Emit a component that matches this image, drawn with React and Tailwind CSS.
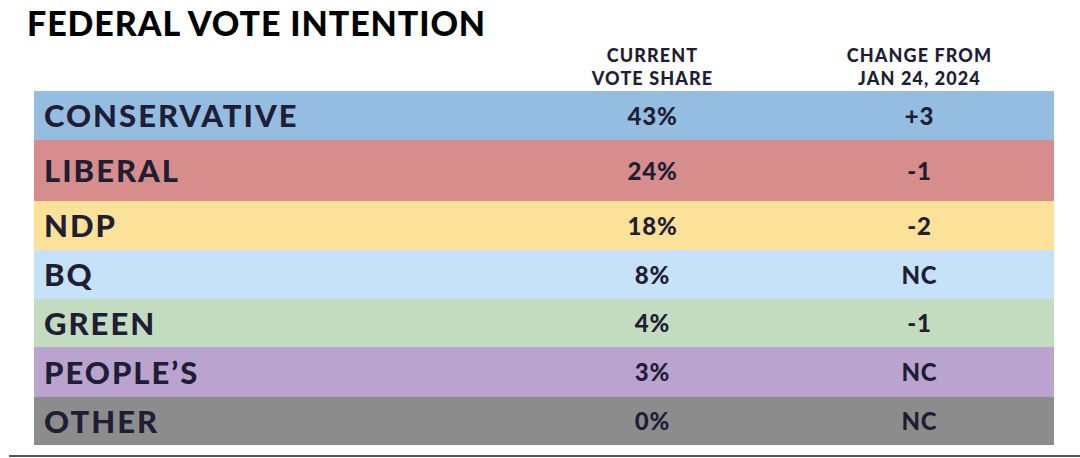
import React from 'react';

const rows = [
    { name: 'CONSERVATIVE', share: '43%', change: '+3', bg: 'bg-[#95bde1]', h: 'h-[49px]' },
    { name: 'LIBERAL', share: '24%', change: '-1', bg: 'bg-[#d78d8b]', h: 'h-[61px]' },
    { name: 'NDP', share: '18%', change: '-2', bg: 'bg-[#fbe298]', h: 'h-[49px]' },
    { name: 'BQ', share: '8%', change: 'NC', bg: 'bg-[#c5e2f8]', h: 'h-[49px]' },
    { name: 'GREEN', share: '4%', change: '-1', bg: 'bg-[#c3dcc0]', h: 'h-[48px]' },
    { name: 'PEOPLE’S', share: '3%', change: 'NC', bg: 'bg-[#baa3cf]', h: 'h-[50px]' },
    { name: 'OTHER', share: '0%', change: 'NC', bg: 'bg-[#8c8c8c]', h: 'h-[48px]' },
];

const App = () => {
    return (
        <div className="w-[1080px] h-[458px] bg-white overflow-hidden font-['Lato',sans-serif] text-[#1f1e34]">
            {/* Title */}
            <h1 className="pl-[27px] pt-[3px] h-[44px] text-[34px] leading-[40px] font-black text-black tracking-[0.9px]">
                FEDERAL VOTE INTENTION
            </h1>

            {/* Column headers */}
            <div className="ml-[34px] w-[1020px] grid grid-cols-[486px_265px_1fr] h-[47px] text-[18px] leading-[23px] font-black tracking-[1.1px]">
                <div />
                <div className="text-center">CURRENT<br />VOTE SHARE</div>
                <div className="text-center">CHANGE FROM<br />JAN 24, 2024</div>
            </div>

            {/* Table */}
            <div className="ml-[34px] w-[1020px] flex flex-col">
                {rows.map((r) => (
                    <div key={r.name} className={`grid grid-cols-[486px_265px_1fr] items-center ${r.bg} ${r.h}`}>
                        <div className="pl-[10px] text-[31px] font-black tracking-[2px]">{r.name}</div>
                        <div className="text-center text-[24px] font-black tracking-[0.8px]">{r.share}</div>
                        <div className="text-center text-[24px] font-black tracking-[0.8px]">{r.change}</div>
                    </div>
                ))}
            </div>

            {/* Bottom rule */}
            <div className="ml-[9px] mt-[10px] h-[2px] bg-[#555555]" />
        </div>
    );
};

export default App;
